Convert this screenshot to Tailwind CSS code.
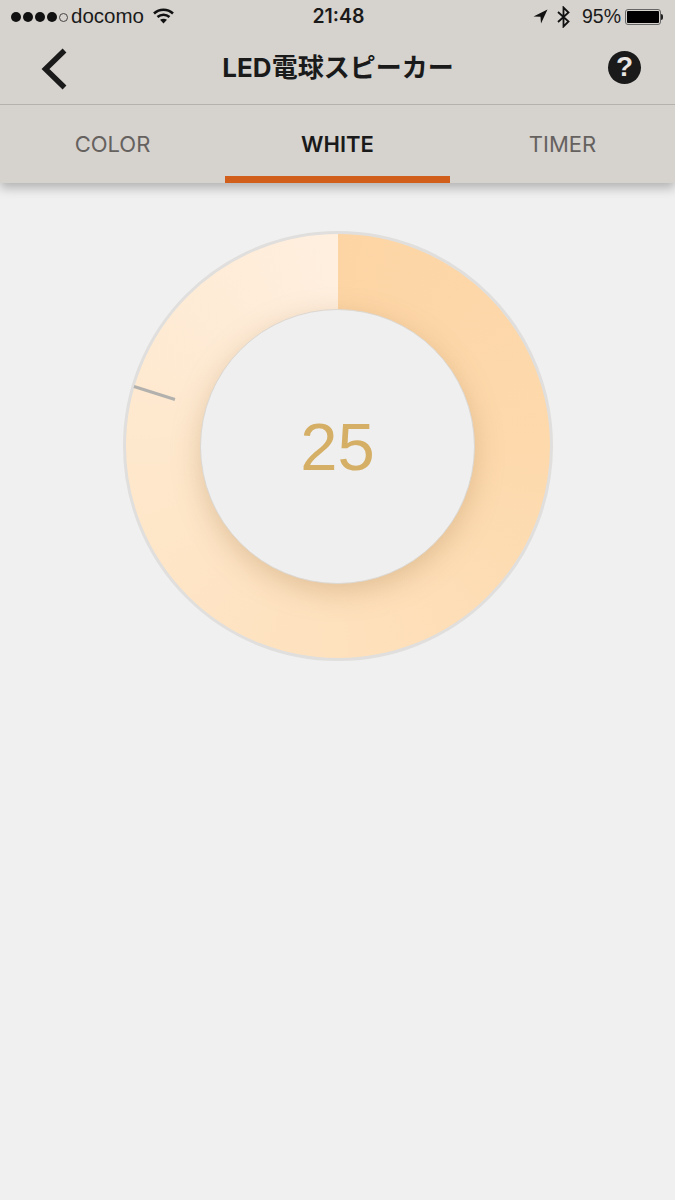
<!DOCTYPE html>
<html>
<head>
	<meta charset="utf-8">
	<meta name="viewport" content="width=device-width, initial-scale=1">
	<script src="https://cdn.jsdelivr.net/npm/@tailwindcss/browser@4"></script>
	<title>LED電球スピーカー</title>
</head>
<body class="w-[675px] h-[1200px] bg-[#f0f0f0] overflow-hidden font-['Inter','Noto_Sans_CJK_JP',sans-serif]">
	<div class="bg-[#d6d2ce] shadow-[0_5px_10px_rgba(0,0,0,0.26)] relative">
		<!-- status bar -->
		<div class="h-[34px] flex items-center justify-between pl-[11px] pr-[12px] leading-none text-[#1a1a1a]">
			<div class="flex-1 flex items-center">
				<div class="flex gap-[2px] items-center">
					<span class="w-[10px] h-[10px] rounded-full bg-[#111]"></span>
					<span class="w-[10px] h-[10px] rounded-full bg-[#111]"></span>
					<span class="w-[10px] h-[10px] rounded-full bg-[#111]"></span>
					<span class="w-[10px] h-[10px] rounded-full bg-[#111]"></span>
					<span class="w-[9px] h-[9px] rounded-full border border-[#444]"></span>
				</div>
				<span class="ml-[3px] font-['Liberation_Sans'] text-[20.5px] -mt-[1px]">docomo</span>
				<svg class="ml-[9px] -mt-[3px]" width="21" height="16" viewBox="0 0 21 16"><path d="M1 5.500C6.500 .5 14.500 .5 20 5.500" fill="none" stroke="#111" stroke-width="2.600"/><path d="M4.500 9C8 6 13 6 16.500 9" fill="none" stroke="#111" stroke-width="2.600"/><path d="M7 11.800Q10.500 9.500 14 11.800L10.500 15.500Z" fill="#111"/></svg>
			</div>
			<div class="font-semibold text-[19.5px] ml-[3px] -mt-[1px]">21:48</div>
			<div class="flex-1 flex items-center justify-end">
				<svg class="-mt-[2px]" width="15" height="15" viewBox="0 0 15 15"><path d="M14.500 .5L0.500 7.500L7.500 7.800L8 14.500Z" fill="#111"/></svg>
				<svg class="ml-[9px] -mt-[1px]" width="13" height="22" viewBox="0 0 13 22"><path d="M1 6L11.500 15.500L6.500 20.500V1.500L11.500 6.500L1 16" fill="none" stroke="#111" stroke-width="1.800"/></svg>
				<span class="ml-[12px] font-['Liberation_Sans'] text-[19.5px] -mt-[1px]">95%</span>
				<div class="ml-[4px] w-[36px] h-[16px] rounded-[3px] border border-[#666] p-[1px] -mt-[1px]"><div class="w-full h-full bg-black rounded-[1px]"></div></div>
				<div class="w-[2px] h-[6px] bg-[#222] rounded-r-sm -mt-[1px]"></div>
			</div>
		</div>
		<!-- nav -->
		<div class="h-[70px] flex items-center justify-between pl-[41px] pr-[34px]">
			<svg width="26" height="42" viewBox="0 0 26 42"><path d="M23.500 2.500L4.500 21L23.500 39.500" fill="none" stroke="#1a1a1a" stroke-width="5.500"/></svg>
			<h1 class="font-bold text-[26px] text-[#1a1a1a] leading-none -mt-[2px] ml-[1px] font-['Inter','Noto_Sans_CJK_JP',sans-serif]">LED電球スピーカー</h1>
			<div class="w-[33px] h-[33px] -mt-[4px] rounded-full bg-[#1a1a1a] text-[#e8e5e2] flex items-center justify-center font-['Liberation_Sans'] font-bold text-[28px] leading-none">?</div>
		</div>
		<div class="h-px bg-[#b5b1ad]"></div>
		<!-- tabs -->
		<div class="h-[78px] grid grid-cols-3 text-[22px] leading-none">
			<div class="flex items-center justify-center text-[#65615e]"><span>COLOR</span></div>
			<div class="flex items-center justify-center font-semibold text-[#1a1a1a] border-b-[7px] border-[#d15f1b]"><span class="mt-[7px]">WHITE</span></div>
			<div class="flex items-center justify-center text-[#65615e]"><span>TIMER</span></div>
		</div>
	</div>

	<!-- dial -->
	<div class="flex justify-center pt-[48px]">
		<div class="relative w-[430px] h-[430px] shrink-0 rounded-full border-[3px] border-[#e0dfdd] bg-[conic-gradient(#fdd5a5_0deg,#fdd9ac_90deg,#fee1bd_180deg,#fee8cd_270deg,#ffefdf_360deg)] flex items-center justify-center">
			<div class="w-[275px] h-[275px] mt-[1px] rounded-full bg-[#efefef] border border-[#dcd8d2] shadow-[0_8px_28px_rgba(170,130,80,0.34)] flex items-center justify-center">
				<span class="text-[#d5af66] text-[67px] leading-none font-['Liberation_Sans']">25</span>
			</div>
			<svg class="absolute left-[4px] top-[150px]" width="48" height="20" viewBox="0 0 48 20"><path d="M4 2.500L45 15.500" stroke="#b3b1ae" stroke-width="3"/></svg>
		</div>
	</div>
</body>
</html>
